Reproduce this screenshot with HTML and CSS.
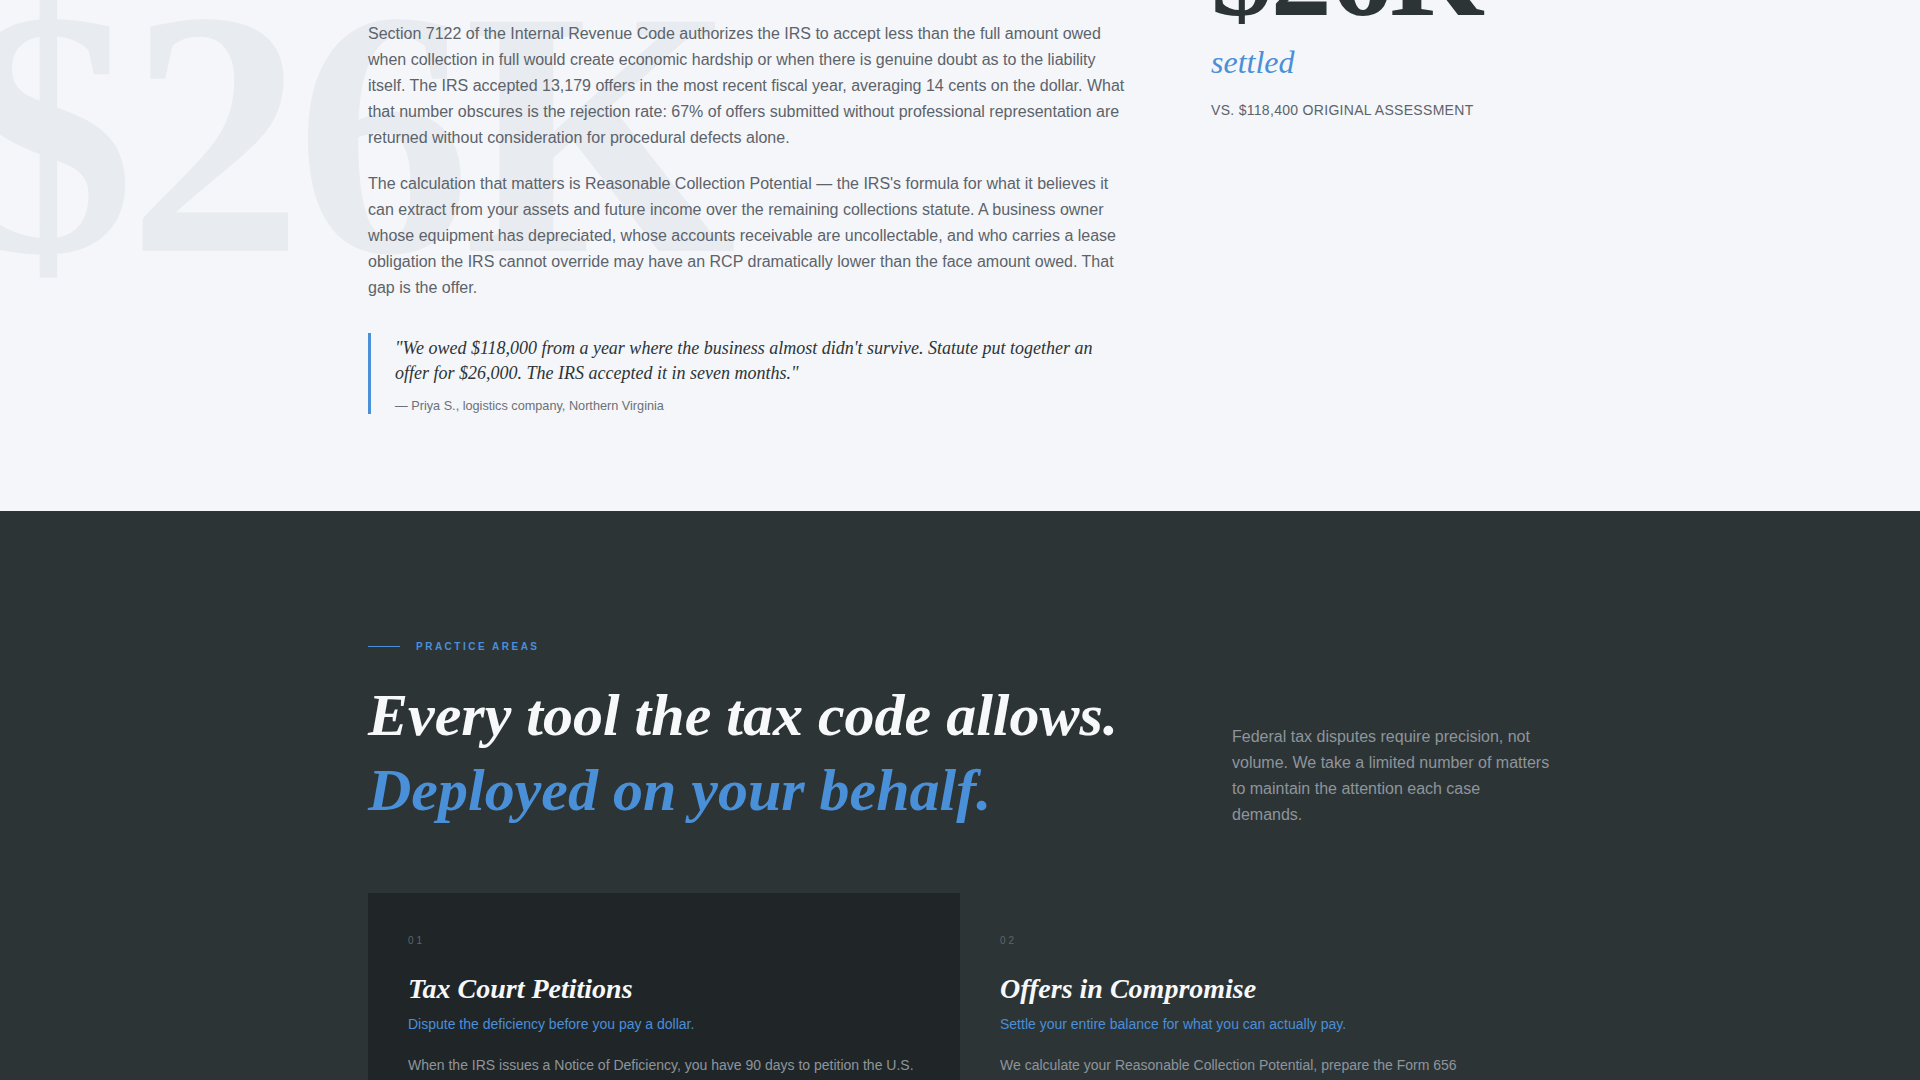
FILE: index.html
```html
<!DOCTYPE html>
<html lang="en">
<head>
<meta charset="utf-8">
<title>Offers in Compromise — Practice Areas</title>
<link rel="stylesheet" href="styles.css">
</head>
<body>
<section class="oic">
  <div class="oic-bg" aria-hidden="true">$26K</div>
  <div class="container oic-grid">
    <div class="oic-copy">
      <p>Section 7122 of the Internal Revenue Code authorizes the IRS to accept less than the full amount owed when collection in full would create economic hardship or when there is genuine doubt as to the liability itself. The IRS accepted 13,179 offers in the most recent fiscal year, averaging 14 cents on the dollar. What that number obscures is the rejection rate: 67% of offers submitted without professional representation are returned without consideration for procedural defects alone.</p>
      <p>The calculation that matters is Reasonable Collection Potential — the IRS's formula for what it believes it can extract from your assets and future income over the remaining collections statute. A business owner whose equipment has depreciated, whose accounts receivable are uncollectable, and who carries a lease obligation the IRS cannot override may have an RCP dramatically lower than the face amount owed. That gap is the offer.</p>
      <blockquote class="quote">
        <p>"We owed $118,000 from a year where the business almost didn't survive. Statute put together an offer for $26,000. The IRS accepted it in seven months."</p>
        <cite>— Priya S., logistics company, Northern Virginia</cite>
      </blockquote>
    </div>
    <aside class="oic-stat">
      <div class="stat-num">$26K</div>
      <div class="stat-word">settled</div>
      <div class="stat-note">vs. $118,400 original assessment</div>
    </aside>
  </div>
</section>

<section class="practice">
  <div class="container">
    <div class="practice-head">
      <div class="practice-title">
        <div class="eyebrow"><span class="eyebrow-line"></span><span>Practice Areas</span></div>
        <h2>Every tool the tax code allows.<br><span class="accent">Deployed on your behalf.</span></h2>
      </div>
      <p class="practice-intro">Federal tax disputes require precision, not volume. We take a limited number of matters to maintain the attention each case demands.</p>
    </div>
    <div class="cards">
      <article class="card card-active">
        <div class="card-num">01</div>
        <h3>Tax Court Petitions</h3>
        <p class="card-tag">Dispute the deficiency before you pay a dollar.</p>
        <p class="card-body">When the IRS issues a Notice of Deficiency, you have 90 days to petition the U.S. Tax Court. Filing preserves your right to contest the assessment before an independent judge without paying first.</p>
      </article>
      <article class="card">
        <div class="card-num">02</div>
        <h3>Offers in Compromise</h3>
        <p class="card-tag">Settle your entire balance for what you can actually pay.</p>
        <p class="card-body">We calculate your Reasonable Collection Potential, prepare the Form 656 submission, and negotiate directly with the assigned Offer examiner.</p>
      </article>
    </div>
  </div>
</section>
</body>
</html>
```

FILE: styles.css
```css
* { box-sizing: border-box; }

html, body {
  margin: 0;
  padding: 0;
}

body {
  font-family: "Liberation Sans", Arial, sans-serif;
  background: #2d3436;
  color: #5c636b;
}

.container {
  width: 1184px;
  margin: 0 auto;
}

/* ---------- Offer in compromise section ---------- */
.oic {
  position: relative;
  overflow: hidden;
  background: #f4f6f9;
  padding-bottom: 97.3px;
}

.oic-bg {
  position: absolute;
  left: -40px;
  top: -42px;
  font-family: "Liberation Serif", "Times New Roman", serif;
  font-weight: 700;
  font-size: 350px;
  line-height: 1;
  letter-spacing: -0.02em;
  color: #e8ebef;
  white-space: nowrap;
  z-index: 0;
  user-select: none;
}

.oic-grid {
  position: relative;
  z-index: 1;
  display: grid;
  grid-template-columns: 760px 1fr;
  column-gap: 83px;
  align-items: start;
  margin-top: -86px;
}

.oic-copy {
  padding-top: 107px;
}

.oic-copy > p {
  margin: 0 0 20px;
  font-size: 16px;
  line-height: 26px;
  color: #5c636b;
}

.oic-copy > p:last-of-type {
  margin-bottom: 0;
}

.quote {
  margin: 32px 0 0;
  padding: 3px 0 0 24px;
  border-left: 3px solid #4a8fd8;
}

.quote p {
  margin: 0;
  font-family: "Liberation Serif", "Times New Roman", serif;
  font-style: italic;
  font-size: 18px;
  line-height: 24.5px;
  color: #2d3436;
}

.quote cite {
  display: block;
  margin-top: 12.5px;
  font-style: normal;
  font-size: 12.7px;
  line-height: 16px;
  color: #6b7178;
}

.stat-num {
  font-family: "Liberation Serif", "Times New Roman", serif;
  font-weight: 700;
  font-size: 122px;
  line-height: 120px;
  letter-spacing: -0.01em;
  color: #2d3436;
}

.stat-word {
  margin-top: 9px;
  font-family: "Liberation Serif", "Times New Roman", serif;
  font-style: italic;
  font-size: 32px;
  line-height: 38px;
  color: #4a8fd8;
}

.stat-note {
  margin-top: 19px;
  font-size: 14px;
  line-height: 20px;
  letter-spacing: 0.3px;
  text-transform: uppercase;
  color: #5c636b;
}

/* ---------- Practice areas ---------- */
.practice {
  background: #2d3436;
  padding-top: 128px;
  padding-bottom: 120px;
}

.practice-head {
  display: flex;
  justify-content: space-between;
  align-items: flex-end;
  margin-bottom: 65px;
}

.eyebrow {
  display: flex;
  align-items: center;
  gap: 16px;
  height: 15px;
  margin-bottom: 24px;
  font-size: 10px;
  font-weight: 700;
  letter-spacing: 2.5px;
  text-transform: uppercase;
  color: #4a8fd8;
}

.eyebrow-line {
  display: block;
  width: 32px;
  height: 1px;
  background: #4a8fd8;
}

.practice-title h2 {
  margin: 0;
  font-family: "Liberation Serif", "Times New Roman", serif;
  font-style: italic;
  font-weight: 700;
  font-size: 60px;
  line-height: 75px;
  color: #f7f8fa;
}

.practice-title .accent {
  color: #4a90d9;
}

.practice-intro {
  width: 320px;
  margin: 0;
  font-size: 16px;
  line-height: 26px;
  color: #8e959b;
}

.cards {
  display: grid;
  grid-template-columns: 1fr 1fr;
}

.card {
  padding: 40px;
  min-height: 320px;
}

.card-active {
  background: #202628;
}

.card-num {
  font-size: 10px;
  line-height: 15px;
  letter-spacing: 3px;
  color: #5d656a;
}

.card h3 {
  margin: 24px 0 0;
  font-family: "Liberation Serif", "Times New Roman", serif;
  font-style: italic;
  font-weight: 700;
  font-size: 28px;
  line-height: 34px;
  color: #f7f8fa;
}

.card-tag {
  margin: 8px 0 0;
  font-size: 14px;
  line-height: 21px;
  color: #4a8fd8;
}

.card-body {
  margin: 18px 0 0;
  font-size: 14px;
  line-height: 24px;
  color: #8e959b;
}
```
